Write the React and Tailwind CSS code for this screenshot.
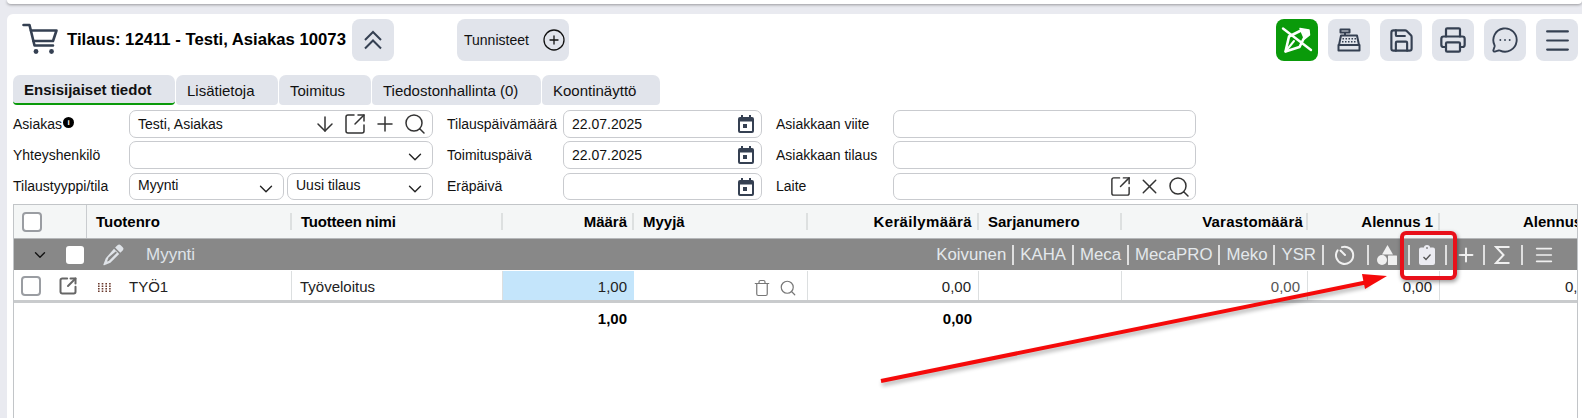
import React from "react";
import { ArrowDown, SquareArrowOutUpRight, Plus, Search, ChevronDown, X, Save, Printer, MessageCircleMore, Menu, CirclePlus, Trash } from "lucide-react";

const DARK = "#354052";

function Cart() {
  return (
    <svg width="36" height="32" viewBox="0 0 36 32" fill="none" stroke={DARK} strokeWidth="2.6" strokeLinejoin="round" strokeLinecap="round">
      <path d="M1.5 2H7.5L12.5 22.5H31" />
      <path d="M9 7.5H34.5L31 18H11.5" />
      <circle cx="14" cy="28.5" r="2.4" fill={DARK} stroke="none" />
      <circle cx="29.5" cy="28.5" r="2.4" fill={DARK} stroke="none" />
    </svg>
  );
}

function DoubleUp() {
  return (
    <svg width="20" height="20" viewBox="0 0 20 20" fill="none" stroke={DARK} strokeWidth="2">
      <path d="M2 10L10 2L18 10" />
      <path d="M2 18.500L10 10.500L18 18.500" />
    </svg>
  );
}

function PenOff() {
  return (
    <svg width="42" height="42" viewBox="0 0 42 42" fill="none" stroke="#fff" strokeLinecap="round" strokeLinejoin="round">
      <path d="M24 12L13 17.500L9.500 32.500L23.500 28L28.500 18" strokeWidth="2.6" />
      <path d="M24 9.500L33 11L33.500 16L28.500 20Z" fill="#fff" strokeWidth="1.5" />
      <path d="M9.500 32.500L18 22" strokeWidth="2" />
      <path d="M7 9.500L35 31" strokeWidth="2.4" />
    </svg>
  );
}

function Register() {
  return (
    <svg width="24" height="24" viewBox="0 0 24 24" fill="none" stroke={DARK} strokeWidth="2" strokeLinejoin="round">
      <path d="M3.500 1.500H12.500V4.500H3.500Z" />
      <path d="M8 4.500V7.500" />
      <path d="M4 7.500H20L22 17H2Z" />
      <path d="M1.500 17H22.500V22.500H1.500Z" />
      <path d="M5.500 10.800H19M5 13.800H19.500" strokeDasharray="1.5 1.500" strokeWidth="1.400" />
    </svg>
  );
}

function Calendar() {
  return (
    <svg width="16" height="18" viewBox="0 0 16 18" fill={DARK}>
      <path d="M3 0h2v2.500H3zM11 0h2v2.500h-2z" />
      <path d="M2 2h12a2 2 0 0 1 2 2v12a2 2 0 0 1-2 2H2a2 2 0 0 1-2-2V4a2 2 0 0 1 2-2zm0 4.500V15.500a.6.6 0 0 0 .6.6h10.800a.6.6 0 0 0 .6-.6V6.500z" fillRule="evenodd" />
      <path d="M5 9h4v4H5z" />
    </svg>
  );
}

function PencilFilled() {
  return (
    <svg width="22" height="22" viewBox="0 0 22 22" fill="#dfe3e8">
      <path d="M15.500 1.200a2.300 2.300 0 0 1 3.200 0l2 2a2.300 2.300 0 0 1 0 3.200L18.300 8.800 13.100 3.600zM12 4.800l5.200 5.200-8.800 8.800-6.200 2.400a.6.6 0 0 1-.8-.8l2.400-6.200zM6.500 13.500l-1.500 4 1.800-.6 8.200-8.200-1.300-1.300z" fillRule="evenodd" />
    </svg>
  );
}

function GridDots() {
  const xs = [0, 3.7, 7.4, 11.1];
  const ys = [0, 2.5, 5, 7.5];
  return (
    <svg width="13" height="9" viewBox="0 0 13 9" fill="#6b3a2e">
      {xs.map((x) => ys.map((y) => <rect key={`${x}-${y}`} x={x} y={y} width="1.6" height="1.500" />))}
    </svg>
  );
}

function Clock() {
  return (
    <svg width="20" height="20" viewBox="0 0 20 20" fill="none" stroke="#f0f0f0" strokeWidth="2" strokeLinecap="round">
      <path d="M7 2.100A8.600 8.600 0 1 1 2.600 5.300" />
      <path d="M5.500 5.500L10 10" />
    </svg>
  );
}

function ShapesIcon() {
  return (
    <svg width="20" height="20" viewBox="0 0 20 20" fill="#f0f0f0">
      <path d="M10.500 0L16 9.500H5z" />
      <circle cx="5" cy="15" r="5" />
      <rect x="11" y="10.500" width="9" height="9.500" rx="0.5" />
    </svg>
  );
}

function ClipCheck() {
  return (
    <svg width="16" height="20" viewBox="0 0 16 20">
      <path d="M2 2.500H5A3 2.500 0 0 1 11 2.500H14A2 2 0 0 1 16 4.500V18A2 2 0 0 1 14 20H2A2 2 0 0 1 0 18V4.500A2 2 0 0 1 2 2.500Z" fill="#ececf2" />
      <path d="M4.500 12L7 14.500L11.500 9.500" fill="none" stroke="#555" strokeWidth="1.300" />
      <circle cx="8" cy="3" r="1" fill="#888" />
    </svg>
  );
}

function SigmaIcon() {
  return (
    <svg width="16" height="20" viewBox="0 0 16 20" fill="none" stroke="#f0f0f0" strokeWidth="2">
      <path d="M15.500 2H2L9.500 10L2 18H15.500" />
    </svg>
  );
}

function ToolBtn({ children, green }) {
  return (
    <div className={`w-[42px] h-[42px] rounded-[8px] flex items-center justify-center ${green ? "bg-[#0a9a0a]" : "bg-[#e1e4eb]"}`}>
      {children}
    </div>
  );
}

function Box({ className, children }) {
  return (
    <div className={`h-full rounded-[7px] border border-[#c9cbcf] bg-white flex items-center pl-[8px] pr-[6px] text-[14px] text-[#111] ${className}`}>
      {children}
    </div>
  );
}

function Tab({ w, active, children }) {
  return (
    <div
      className={`h-[30px] rounded-t-[7px] rounded-b-[4px] bg-[#e1e4eb] flex items-center shrink-0 pl-[11px] pt-[2px] ${w} ${active ? "border-b-2 border-[#0a9a0a] font-bold" : ""}`}
    >
      {children}
    </div>
  );
}

const Chev = () => <ChevronDown size={22} strokeWidth={1.5} color="#222" className="mt-[4px] shrink-0" />;

function IconSlot({ w, children }) {
  return <span className={`flex justify-center shrink-0 ${w}`}>{children}</span>;
}

function FormRow({ h, mt, label1, extra, mid, label2, date, label3, last }) {
  return (
    <div className={`flex ${h} ${mt}`}>
      <div className="w-[116px] shrink-0 flex items-center text-[14px] text-[#111]">{label1}{extra}</div>
      <div className="w-[304px] shrink-0 h-full flex gap-[3px]">{mid}</div>
      <div className="w-[116px] ml-[14px] shrink-0 flex items-center text-[14px] text-[#111]">{label2}</div>
      <Box className="w-[199px] shrink-0 justify-between">
        <span>{date}</span>
        <span className="mr-[1px]"><Calendar /></span>
      </Box>
      <div className="w-[117px] ml-[14px] shrink-0 flex items-center text-[14px] text-[#111]">{label3}</div>
      <Box className="w-[303px] shrink-0 justify-end">{last}</Box>
    </div>
  );
}

const COLS = "grid grid-cols-[73px_205px_211px_131px_174px_171px_143px_186px_132px_139px]";
const HS = "after:content-[''] after:absolute after:right-0 after:top-[8px] after:bottom-[8px] after:w-[2px] after:bg-[#dde0e0]";

function HCell({ right, sep = true, children, className = "" }) {
  return (
    <div className={`relative flex items-center pt-[1px] font-bold text-[15px] text-black whitespace-nowrap overflow-hidden ${right ? "justify-end pr-[7px]" : "pl-[9px]"} ${sep ? HS : ""} ${className}`}>
      {children}
    </div>
  );
}

function DCell({ right, className = "", children }) {
  return (
    <div className={`flex items-center pt-[4px] text-[15px] text-[#222] whitespace-nowrap overflow-hidden border-r border-[#dcdfe0] ${right ? "justify-end pr-[7px]" : ""} ${className}`}>
      {children}
    </div>
  );
}

const GSep = () => <div className="w-[2px] h-[20px] bg-[#dfdfdf] shrink-0" />;

function GroupText({ children }) {
  return <span className="mx-[6px] text-[16.8px] text-[#e4e8ec]">{children}</span>;
}

export default function App() {
  return (
    <div className="w-[1582px] h-[418px] overflow-hidden bg-[#e9eaf0] relative" style={{ fontFamily: '"Liberation Sans", Arial, sans-serif' }}>
      <div className="ml-[7px] h-[4px] bg-white rounded-b-[5px] shadow-[0_1px_3px_rgba(0,0,0,0.35)]" />
      <div className="ml-[7px] mt-[10px] h-[404px] bg-white rounded-tl-[6px] flex flex-col">
        {/* heading */}
        <div className="flex pt-[5px] h-[47px] shrink-0">
          <div className="ml-[15px] mt-[4px] shrink-0"><Cart /></div>
          <div className="ml-[9px] h-[42px] flex items-center text-[16.7px] font-bold text-black whitespace-nowrap w-[285px]">Tilaus: 12411 - Testi, Asiakas 10073</div>
          <ToolBtn><DoubleUp /></ToolBtn>
          <div className="ml-[63px] w-[112px] h-[42px] rounded-[8px] bg-[#e1e4eb] flex items-center pl-[7px] gap-[13px] text-[14px] text-[#111]">
            Tunnisteet
            <CirclePlus size={24} strokeWidth={1.3} color="#111" />
          </div>
          <div className="ml-auto mr-[4px] flex gap-[10px]">
            <ToolBtn green><PenOff /></ToolBtn>
            <ToolBtn><Register /></ToolBtn>
            <ToolBtn><Save size={27} strokeWidth={1.9} color={DARK} /></ToolBtn>
            <ToolBtn><Printer size={28} strokeWidth={1.9} color={DARK} /></ToolBtn>
            <ToolBtn><MessageCircleMore size={28} strokeWidth={1.6} color={DARK} /></ToolBtn>
            <ToolBtn><Menu size={31} strokeWidth={1.7} color={DARK} /></ToolBtn>
          </div>
        </div>

        {/* tabs */}
        <div className="flex mt-[14px] pl-[6px] gap-[1px] text-[15px] text-[#111] shrink-0">
          <Tab w="w-[162px]" active>Ensisijaiset tiedot</Tab>
          <Tab w="w-[102px]">Lisätietoja</Tab>
          <Tab w="w-[92px]">Toimitus</Tab>
          <Tab w="w-[169px]">Tiedostonhallinta (0)</Tab>
          <Tab w="w-[118px]">Koontinäyttö</Tab>
        </div>

        {/* form */}
        <div className="pl-[6px] mt-[5px] shrink-0">
          <FormRow
            h="h-[28px]"
            mt=""
            label1="Asiakas"
            extra={<span className="ml-[1px] mb-[3px] w-[11px] h-[11px] rounded-full bg-black text-white text-[8px] font-bold flex items-center justify-center">i</span>}
            mid={
              <Box className="w-full justify-between">
                <span>Testi, Asiakas</span>
                <div className="flex items-center mr-[-4px]">
                  <IconSlot w="w-[30px]"><ArrowDown size={24} strokeWidth={1.5} color="#333" /></IconSlot>
                  <IconSlot w="w-[30px]"><SquareArrowOutUpRight size={24} strokeWidth={1.5} color="#333" /></IconSlot>
                  <IconSlot w="w-[30px]"><Plus size={24} strokeWidth={1.5} color="#333" /></IconSlot>
                  <IconSlot w="w-[30px]"><Search size={24} strokeWidth={1.5} color="#333" /></IconSlot>
                </div>
              </Box>
            }
            label2="Tilauspäivämäärä"
            date="22.07.2025"
            label3="Asiakkaan viite"
          />
          <FormRow
            h="h-[28px]"
            mt="mt-[3px]"
            label1="Yhteyshenkilö"
            mid={<Box className="w-full justify-end"><Chev /></Box>}
            label2="Toimituspäivä"
            date="22.07.2025"
            label3="Asiakkaan tilaus"
          />
          <FormRow
            h="h-[27px]"
            mt="mt-[4px]"
            label1="Tilaustyyppi/tila"
            mid={
              <>
                <Box className="w-[155px] shrink-0 justify-between"><span className="mb-[3px]">Myynti</span><Chev /></Box>
                <Box className="w-[146px] shrink-0 justify-between"><span className="mb-[3px]">Uusi tilaus</span><Chev /></Box>
              </>
            }
            label2="Eräpäivä"
            date=""
            label3="Laite"
            last={
              <div className="flex items-center mr-[-4px]">
                <IconSlot w="w-[29px]"><SquareArrowOutUpRight size={23} strokeWidth={1.5} color="#333" /></IconSlot>
                <IconSlot w="w-[29px]"><X size={25} strokeWidth={1.4} color="#333" /></IconSlot>
                <IconSlot w="w-[29px]"><Search size={24} strokeWidth={1.5} color="#333" /></IconSlot>
              </div>
            }
          />
        </div>

        {/* table */}
        <div className="ml-[6px] mr-[4px] mt-[4px] border border-b-0 border-[#c2c5c8] flex-1 min-h-0 overflow-hidden">
          <div className={`${COLS} h-[33px] bg-[#f4f6f6]`}>
            <div className="border-r border-[#c9cccf] flex items-center pl-[8px]">
              <div className="w-[20px] h-[20px] rounded-[4px] border-2 border-[#9a9da2] bg-white" />
            </div>
            <HCell>Tuotenro</HCell>
            <HCell className="tracking-[-0.2px]">Tuotteen nimi</HCell>
            <HCell right>Määrä</HCell>
            <HCell>Myyjä</HCell>
            <HCell right className="tracking-[0.35px]">Keräilymäärä</HCell>
            <HCell>Sarjanumero</HCell>
            <HCell right className="tracking-[0.2px] !pr-[5px]">Varastomäärä</HCell>
            <HCell right>Alennus 1</HCell>
            <HCell sep={false} className="pl-[83px]">Alennus 2</HCell>
          </div>

          <div className="h-[32px] bg-[#888888] border-t border-[#b5b7b9] flex items-center">
            <ChevronDown size={18} strokeWidth={1.8} color="#111" className="ml-[17px] shrink-0" />
            <div className="ml-[17px] w-[18px] h-[18px] rounded-[3px] bg-white shrink-0" />
            <div className="ml-[18px] shrink-0"><PencilFilled /></div>
            <span className="ml-[22px] text-[17px] text-[#dfe3e8]">Myynti</span>
            <div className="ml-auto flex items-center pr-[22px]">
              <GroupText>Koivunen</GroupText><GSep />
              <GroupText>KAHA</GroupText><GSep />
              <GroupText>Meca</GroupText><GSep />
              <GroupText>MecaPRO</GroupText><GSep />
              <GroupText>Meko</GroupText><GSep />
              <GroupText>YSR</GroupText><GSep />
              <span className="ml-[11px] mr-[12px]"><Clock /></span><GSep />
              <span className="ml-[8px] mr-[11px]"><ShapesIcon /></span><GSep />
              <span className="ml-[9px] mr-[10px]"><ClipCheck /></span><GSep />
              <Plus size={22} strokeWidth={2.200} color="#f0f0f0" className="ml-[8px] mr-[6px]" /><GSep />
              <span className="ml-[9px] mr-[11px]"><SigmaIcon /></span><GSep />
              <Menu size={22} strokeWidth={1.800} color="#f0f0f0" className="ml-[10px]" />
            </div>
          </div>

          <div className={`${COLS} h-[33px] border-t border-[#fff] border-b-[3px] border-b-[#c9cbcd]`}>
            <div className="flex items-center pl-[7px] gap-[17px]">
              <div className="w-[20px] h-[20px] rounded-[4px] border-2 border-[#9a9da2] bg-white shrink-0" />
              <SquareArrowOutUpRight size={20} strokeWidth={2.4} color="#666" />
            </div>
            <DCell className="pl-[11px]"><GridDots /><span className="ml-[18px]">TYÖ1</span></DCell>
            <DCell className="pl-[8px]">Työveloitus</DCell>
            <DCell right className="bg-[#c4e5fb] border-r-0">1,00</DCell>
            <DCell className="justify-end pr-[10px] gap-[8px]">
              <Trash size={18} strokeWidth={1.600} color="#777" />
              <Search size={18} strokeWidth={1.600} color="#777" />
            </DCell>
            <DCell right>0,00</DCell>
            <DCell />
            <DCell right className="text-[#555]">0,00</DCell>
            <DCell right>0,00</DCell>
            <DCell className="pl-[125px] border-r-0">0,00</DCell>
          </div>

          <div className={`${COLS} h-[32px] font-bold text-[15px] text-black`}>
            <div /><div /><div />
            <div className="flex items-center justify-end pr-[7px]">1,00</div>
            <div />
            <div className="flex items-center justify-end pr-[7px]">0,00</div>
          </div>
        </div>
      </div>

      {/* annotation over the screenshot */}
      <div className="absolute left-[1400px] top-[231px] w-[57px] h-[49px] rounded-[6px] border-[4px] border-[#e8101a] shadow-[1px_2px_4px_rgba(0,0,0,0.4)]" />
      <svg className="absolute left-0 top-0 pointer-events-none" width="1582" height="418" viewBox="0 0 1582 418" fill="none">
        <g opacity="0.3" transform="translate(1 3)" style={{ filter: "blur(2px)" }}>
          <path d="M881 381L1368 282" stroke="#000" strokeWidth="4" />
        </g>
        <path d="M881 381L1368 282" stroke="#f50a0a" strokeWidth="4" />
        <path d="M1387 276L1362 274L1365 289Z" fill="#f50a0a" />
      </svg>
    </div>
  );
}
